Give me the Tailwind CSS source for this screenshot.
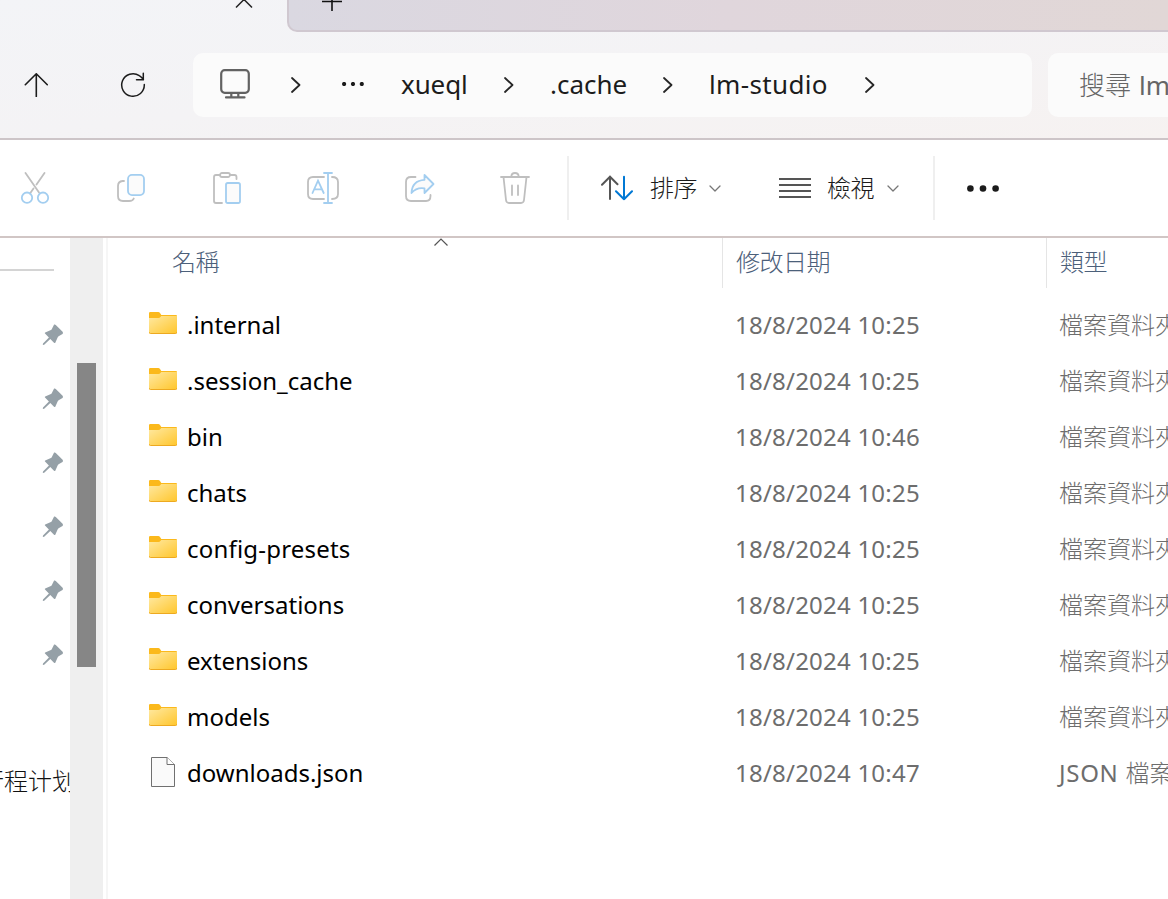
<!DOCTYPE html>
<html lang="zh-Hant">
<head>
<meta charset="utf-8">
<title>lm-studio</title>
<script src="https://cdn.jsdelivr.net/npm/@tailwindcss/browser@4"></script>
</head>
<body class="w-[1168px] h-[899px] overflow-hidden bg-white font-['Noto_Sans','Noto_Sans_CJK_TC',sans-serif] text-2xl whitespace-nowrap">
<svg class="absolute size-0">
  <defs>
    <linearGradient id="fold" x1="0" y1="0" x2="1" y2="1"><stop offset="0" stop-color="#ffe9a2"/><stop offset="1" stop-color="#ffc62c"/></linearGradient>
  </defs>
  <symbol id="folder" viewBox="0 0 28 22">
    <path d="M0 1.2Q0 0 1.2 0H9.2Q10.4 0 11 1L12.3 3H27Q28 3 28 4V8H0Z" fill="#fbb91c"/>
    <path d="M0 6H9.5Q10.8 6 11.4 5L12.2 4H28V20.5Q28 21.5 27 21.5H1Q0 21.5 0 20.5Z" fill="url(#fold)"/>
    <path d="M.3 20.3Q.3 21.5 1.3 21.5H26.7Q27.7 21.5 27.7 20.3" fill="none" stroke="#eda920"/>
  </symbol>
  <symbol id="file" viewBox="0 0 24 30">
    <path d="M.5 .5H16L23.5 7.5V29.5H.5Z" fill="#fafafa" stroke="#707070"/><path d="M16 .5V7.5H23.5" fill="#fff" stroke="#707070"/>
  </symbol>
  <symbol id="pin" viewBox="0 0 22 22">
    <path d="M12.1 .6Q13 .2 13.8 1L20.6 7.8Q21.5 9 20.5 10L16.6 12.2Q15.8 12.8 15.4 14L13.3 18.7Q12.8 19.4 12 18.7L8.3 15L2.2 20.7L.8 20.9L1 19.4L6.9 13.5L3 9.6Q2.4 8.9 3.2 8.4L8.9 6.1Q9.8 5.5 10.1 4.5Z" fill="#95a0a7"/>
  </symbol>
  <symbol id="chev" viewBox="0 0 10 16"><path d="M1 1L8.5 8L1 15" fill="none" stroke="#262626" stroke-width="1.8" stroke-linecap="round" stroke-linejoin="round"/></symbol>
  <symbol id="down" viewBox="0 0 12 7"><path d="M1 1L6 6L11 1" fill="none" stroke="#777" stroke-width="1.3" stroke-linecap="round" stroke-linejoin="round"/></symbol>
</svg>

<!-- title bar and address bar -->
<header class="h-[140px] flex flex-col bg-linear-to-br from-[#f3f4f7] via-[#f4f3f5] to-[#f6f2f1] border-b-2 border-[#cdc5c8]">
  <div class="h-8 flex">
    <div class="w-[287px] pl-[235px]">
      <svg class="w-[18px] h-2.5" viewBox="0 0 18 10" fill="none" stroke="#222" stroke-width="1.5"><path d="M1 7.500L9 -.5L17 7.500"/></svg>
    </div>
    <div class="flex-1 pl-[33px] rounded-bl-[10px] border-l-2 border-b-2 border-[#d0c8d0] bg-linear-to-r from-[#dad8e1] via-[#e0d6dc] to-[#e1d7d6]">
      <svg class="w-5 h-3" viewBox="0 0 20 12" fill="none" stroke="#111" stroke-width="1.6"><path d="M0 1.500H20M10 0V11"/></svg>
    </div>
  </div>
  <div class="flex items-center h-16 mt-[21px]">
    <svg class="w-6 h-6 ml-6" viewBox="0 0 24 24" fill="none" stroke="#1c1c1c" stroke-width="1.6" stroke-linecap="round" stroke-linejoin="round"><path d="M12.3 23.5V.8M1.3 11.7L12.3 .8L23.3 11.7"/></svg>
    <svg class="w-[26px] h-[26px] ml-[72px]" viewBox="0 0 26 26" fill="none" stroke="#1c1c1c" stroke-width="1.5" stroke-linecap="round" stroke-linejoin="round"><path d="M24.300 12.500A11.300 11.300 0 1 1 19.300 3.600Q22 5.300 23.400 7.800M23.300 1.300V7.800H16.500"/></svg>
    <div class="ml-[47px] w-[839px] h-16 rounded-[10px] bg-[#fbfbfb] flex items-center pl-[27px] text-[26px] text-[#1c1c1c]">
      <svg class="w-[30px] h-[30px] -mt-[3px]" viewBox="0 0 30 30" fill="none" stroke="#626262" stroke-width="2.2"><rect x="1.2" y="1.200" width="27.6" height="22.600" rx="3.5"/><path d="M11.3 24V28.5M18.3 24V28.5M6 28.4H24.5" stroke-linecap="round"/></svg>
      <svg class="w-2.5 h-4 ml-[41px]"><use href="#chev"/></svg>
      <svg class="w-[22px] h-1 ml-[41px] -mt-[3px]" viewBox="0 0 22 4" fill="#1b1b1b"><circle cx="2.1" cy="2" r="2.100"/><circle cx="11" cy="2" r="2.100"/><circle cx="19.8" cy="2" r="2.100"/></svg>
      <span class="w-[66px] ml-[37px] -mt-px tracking-[-0.1px]">xueql</span>
      <svg class="w-2.5 h-4 ml-[37px]"><use href="#chev"/></svg>
      <span class="w-[78px] ml-[36px] -mt-px">.cache</span>
      <svg class="w-2.5 h-4 ml-[35px]"><use href="#chev"/></svg>
      <span class="w-[120px] ml-[36px] -mt-px tracking-[0.35px]">lm-studio</span>
      <svg class="w-2.5 h-4 ml-[36px]"><use href="#chev"/></svg>
    </div>
    <div class="ml-4 flex-1 h-16 rounded-l-[10px] bg-[#fbfbfb] flex items-center pl-[31px] text-[#666] text-[26px] overflow-hidden"><span class="font-light">搜尋</span><span class="ml-2">lm-studio</span></div>
  </div>
</header>

<!-- command bar -->
<section class="h-[98px] flex items-center border-b-2 border-[#d1c6c5] pl-[19px] text-[#1b1b1b]">
  <div class="flex gap-16">
    <svg class="size-8" viewBox="0 0 32 32" fill="none" stroke-width="1.8" stroke-linecap="round"><path d="M6.5 1L20 20.5M25.5 1L17.5 12.5M14.5 16.5L11 21.5" stroke="#bfbfbf"/><circle cx="8" cy="25.7" r="5.200" stroke="#a3cef0"/><circle cx="24" cy="25.7" r="5.200" stroke="#a3cef0"/></svg>
    <svg class="size-8" viewBox="0 0 32 32" fill="none" stroke-width="1.8" stroke-linecap="round"><path d="M9 9H7.5Q3 9.400 3 14V24Q3 29 8 29H14Q18 29 18.8 26.500" stroke="#bfbfbf"/><rect x="13" y="2.900" width="16" height="20.200" rx="4" fill="#fbfbfb" stroke="#a3cef0"/></svg>
    <svg class="size-8" viewBox="0 0 32 32" fill="none" stroke-width="1.8" stroke-linecap="round"><path d="M8.500 3H5Q3 3 3 5V29Q3 31 5 31H11M19.500 3H23.500Q25.500 3 25.500 5V7" stroke="#bfbfbf"/><rect x="9" y="1" width="10" height="4" rx="2" stroke="#bfbfbf"/><rect x="15" y="11" width="14" height="20" rx="1.800" fill="#fbfbfb" stroke="#a3cef0"/></svg>
    <svg class="size-8" viewBox="0 0 32 32" fill="none" stroke-width="1.800" stroke-linecap="round"><path d="M17 5H6Q1 5 1 10V22Q1 27 6 27H17M25 5Q31 5 31 10V22Q31 27 25 27" stroke="#bfbfbf"/><path d="M21 1.200V30.800M17 1H25M17 31H25M5.500 21L11 8.700L16.700 21M7.300 17.300H14.900" stroke="#a3cef0"/></svg>
    <svg class="size-8" viewBox="0 0 32 32" fill="none" stroke-width="1.800" stroke-linecap="round" stroke-linejoin="round"><path d="M12.500 5H8Q3 5 3 10V24Q3 29 8 29H23Q27.500 29 27.500 24V23" stroke="#bfbfbf"/><path d="M21.500 3L30.500 12L21.500 21V16.300Q13.500 15 8.500 21Q9 8.500 21.500 7.800Z" fill="#fbfbfb" stroke="#a3cef0"/></svg>
    <svg class="size-8" viewBox="0 0 32 32" fill="none" stroke="#bfbfbf" stroke-width="1.800" stroke-linecap="round"><path d="M2 5H30M4.500 5L7 28Q7.400 31 10 31H22Q24.600 31 25 28L27.500 5M12.300 4.500Q12.500 1 16 1T19.700 4.500M13 13.500V23M19 13.500V23"/></svg>
  </div>
  <div class="w-0.5 h-16 bg-[#efefef] ml-9"></div>
  <svg class="size-8 ml-8" viewBox="0 0 32 32" fill="none" stroke-width="2" stroke-linecap="round" stroke-linejoin="round"><path d="M9 27V4.500M1 12.800L9 4.800L16.500 12.300" stroke="#555"/><path d="M23 4.800V27.300M15 19.300L23 27.300L31 19.300" stroke="#0078d4"/></svg>
  <span class="ml-[17px] w-12 font-light tracking-[-0.5px]">排序</span>
  <svg class="w-3 h-[7px] ml-[11px]"><use href="#down"/></svg>
  <svg class="w-8 h-8 ml-[58px]" viewBox="0 0 32 32" stroke="#555" stroke-width="2"><path d="M0 7H32M0 13H32M0 19H32M0 25H32"/></svg>
  <span class="ml-4 w-[49px] font-light tracking-[-0.5px]">檢視</span>
  <svg class="w-3 h-[7px] ml-[11px]"><use href="#down"/></svg>
  <div class="w-0.5 h-16 bg-[#efefef] ml-[34px]"></div>
  <svg class="w-8 h-[7px] ml-8" viewBox="0 0 32 7" fill="#1b1b1b"><circle cx="3.400" cy="3.500" r="3.300"/><circle cx="16" cy="3.500" r="3.300"/><circle cx="28.600" cy="3.500" r="3.300"/></svg>
</section>

<main class="h-[661px] flex">
  <!-- navigation pane -->
  <nav class="w-[70px] overflow-hidden flex flex-col items-end">
    <div class="w-[54px] h-0.5 mt-[31px] mr-4 bg-[#d4d4d4]"></div>
    <div class="flex flex-col gap-[42px] mt-[53px] mr-[6px]">
      <svg class="size-[22px]"><use href="#pin"/></svg>
      <svg class="size-[22px]"><use href="#pin"/></svg>
      <svg class="size-[22px]"><use href="#pin"/></svg>
      <svg class="size-[22px]"><use href="#pin"/></svg>
      <svg class="size-[22px]"><use href="#pin"/></svg>
      <svg class="size-[22px]"><use href="#pin"/></svg>
    </div>
    <span lang="zh-Hans" class="mt-[98px] -mr-[6px] font-light text-[#111] font-['Noto_Sans_CJK_SC',sans-serif]">行程计划</span>
  </nav>
  <div class="w-[33px] bg-[#efefef] pt-[125px] pl-[7px]"><div class="w-[19px] h-[304px] bg-[#868686]"></div></div>
  <div class="w-[5px] border-r-2 border-[#f6f6f6]"></div>

  <!-- file list -->
  <div class="flex-1 overflow-hidden">
    <div class="h-[50px] flex text-[#4c607a] font-light tracking-[-0.5px]">
      <div class="w-[615px] pl-16 pt-2 flex border-r border-[#e5e5e5]">
        <span class="w-[262px]">名稱</span>
        <svg class="w-3.5 h-2 -mt-2" viewBox="0 0 14 8" fill="none" stroke="#555" stroke-width="1.200"><path d="M.5 7.500L7 1L13.500 7.500"/></svg>
      </div>
      <div class="w-[324px] pl-[13px] pt-2 border-r border-[#e5e5e5]">修改日期</div>
      <div class="pl-[13px] pt-2">類型</div>
    </div>
    <div id="rows" class="mt-[9px]"></div>
  </div>
</main>
<template id="row">
  <div class="h-14 flex items-center pl-10">
    <svg><use/></svg>
    <span class="w-[548px] shrink-0 text-black"></span>
    <span class="w-[324px] shrink-0 text-[#6d6d6d] tracking-[0.22px]"></span>
    <span class="shrink-0 text-[#6d6d6d]"></span>
  </div>
</template>
<script>
const files = [
  ['.internal', '10:25'], ['.session_cache', '10:25'], ['bin', '10:46'], ['chats', '10:25'],
  ['config-presets', '10:25'], ['conversations', '10:25'], ['extensions', '10:25'], ['models', '10:25'],
  ['downloads.json', '10:47', true]
];
for (const [name, time, isFile] of files) {
  const row = document.getElementById('row').content.cloneNode(true);
  const icon = row.querySelector('svg'), text = row.querySelectorAll('span');
  icon.setAttribute('class', isFile ? 'w-6 h-[30px] ml-[3px] mr-[12px] -mt-0.5 shrink-0' : 'w-7 h-[22px] ml-[1px] mr-[10px] -mt-[4px] shrink-0');
  icon.firstChild.setAttribute('href', isFile ? '#file' : '#folder');
  text[0].textContent = name;
  if (name.includes('-')) text[0].classList.add('tracking-[0.2px]');
  text[1].textContent = '18/8/2024 ' + time;
  text[2].innerHTML = isFile ? '<span class="tracking-[0.7px]">JSON </span><span class="font-light">檔案</span>' : '<span class="font-light">檔案資料夾</span>';
  document.getElementById('rows').append(row);
}
</script>
</body>
</html>
